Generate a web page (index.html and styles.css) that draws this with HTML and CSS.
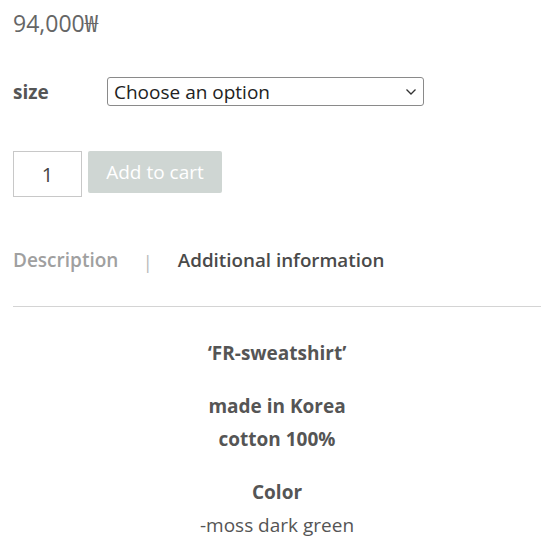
FILE: index.html
```html
<!DOCTYPE html>
<html>
<head>
<meta charset="utf-8">
<link rel="stylesheet" href="styles.css">
</head>
<body>
<div class="page">
  <p class="price">94,000<span class="won">₩</span></p>
  <div class="variation">
    <label class="var-label">size</label>
    <div class="select">
      <span>Choose an option</span>
      <svg class="chev" width="12" height="8" viewBox="0 0 12 8"><path d="M1.5 1.5 L6 6 L10.5 1.5" fill="none" stroke="#333" stroke-width="1.3"/></svg>
    </div>
  </div>
  <div class="cart">
    <div class="qty">1</div>
    <div class="btn">Add to cart</div>
  </div>
  <div class="tabs">
    <span class="tab inactive">Description</span>
    <span class="sep">|</span>
    <span class="tab active">Additional information</span>
  </div>
  <div class="desc">
    <p class="b">‘FR-sweatshirt’</p>
    <p class="b">made in Korea<br>cotton 100%</p>
    <p><span class="b">Color</span><br>-moss dark green</p>
  </div>
</div>
</body>
</html>
```
FILE: styles.css
```css
* { box-sizing: border-box; }
html, body { margin: 0; padding: 0; background: #fff; }
body { font-family: "Open Sans", "Liberation Sans", sans-serif; color: #555; }
.page { padding: 0 12px 0 13px; }
.price { margin: 0; padding-top: 6px; font-size: 23px; line-height: 32px; color: #666; }
.won { font-family: "Noto Sans CJK KR", "Noto Sans", sans-serif; font-size: 24px; }
.variation { display: flex; align-items: center; margin-top: 38px; }
.var-label { width: 94px; font-size: 19px; font-weight: 700; color: #555; }
.select { width: 317px; height: 29px; border: 1px solid #8a8a8a; border-radius: 3px; display: flex; align-items: center; justify-content: space-between; padding: 0 6px 0 6px; font-size: 19px; color: #222; }
.chev { margin-top: 1px; }
.cart { display: flex; align-items: flex-start; gap: 6px; margin-top: 45px; }
.qty { width: 69px; height: 46px; border: 1px solid #c8c8c8; display: flex; align-items: center; justify-content: center; font-size: 20px; color: #444; }
.btn { width: 134px; height: 42px; background: #cfd6d3; color: #fff; font-size: 19px; display: flex; align-items: center; justify-content: center; border-radius: 2px; }
.tabs { display: flex; align-items: center; margin-top: 49px; font-size: 19px; font-weight: 600; line-height: 24px; }
.inactive { color: #a0a0a0; }
.sep { color: #bbb; font-weight: 400; margin: 0 25px 0 24px; padding-top: 4px; }
.active { color: #4a4a4a; font-size: 18.8px; }
.desc { border-top: 1px solid #d4d4d4; margin-top: 32px; text-align: center; font-size: 19px; line-height: 33px; color: #555; padding-top: 30px; }
.desc p { margin: 0 0 20px; }
.b { font-weight: 700; }
```
